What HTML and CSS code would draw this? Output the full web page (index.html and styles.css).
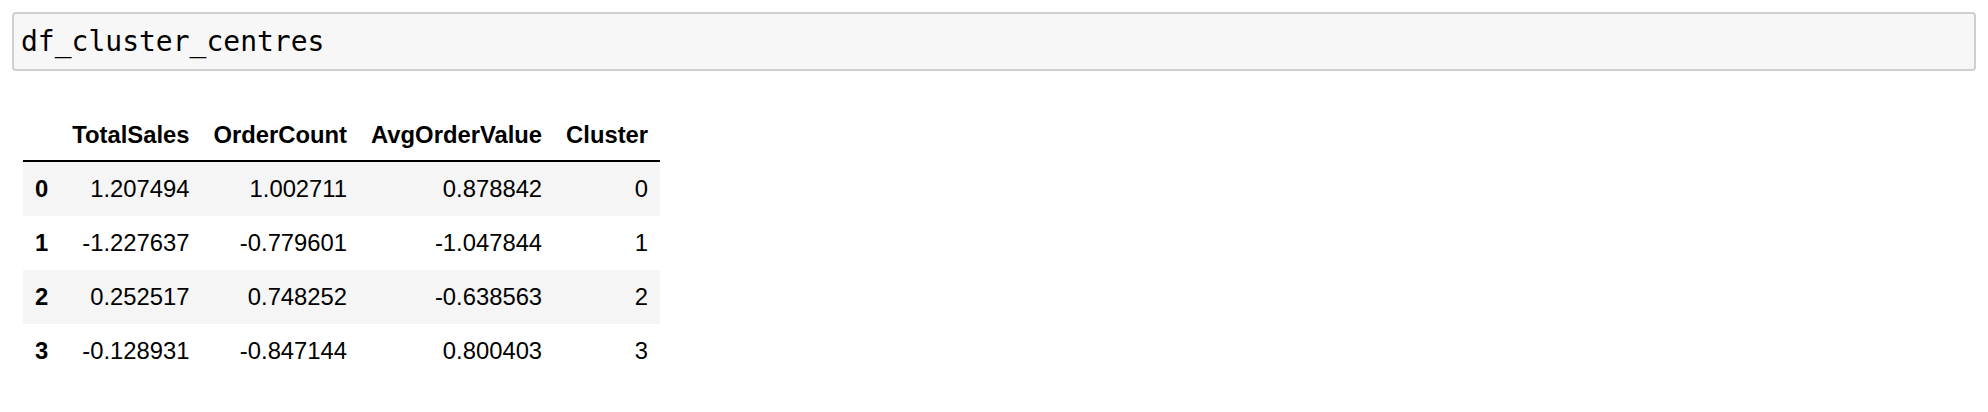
FILE: index.html
```html
<!DOCTYPE html>
<html>
<head>
<meta charset="utf-8">
<link rel="stylesheet" href="styles.css">
</head>
<body>
<div class="cell">
  <div class="input">df_cluster_centres</div>
  <div class="output">
    <table class="dataframe">
      <thead>
        <tr><th></th><th>TotalSales</th><th>OrderCount</th><th>AvgOrderValue</th><th>Cluster</th></tr>
      </thead>
      <tbody>
        <tr><th>0</th><td>1.207494</td><td>1.002711</td><td>0.878842</td><td>0</td></tr>
        <tr><th>1</th><td>-1.227637</td><td>-0.779601</td><td>-1.047844</td><td>1</td></tr>
        <tr><th>2</th><td>0.252517</td><td>0.748252</td><td>-0.638563</td><td>2</td></tr>
        <tr><th>3</th><td>-0.128931</td><td>-0.847144</td><td>0.800403</td><td>3</td></tr>
      </tbody>
    </table>
  </div>
</div>
</body>
</html>
```

FILE: styles.css
```css
html, body {
  margin: 0;
  padding: 0;
  background: #ffffff;
}
.cell {
  padding: 12px 12px 0 12px;
}
.input {
  background: #f7f7f7;
  border: 2px solid #cfcfcf;
  border-radius: 4px;
  padding: 11px 7px;
  font-family: "DejaVu Sans Mono", monospace;
  font-size: 28px;
  line-height: 33px;
  color: #000;
}
.output {
  padding: 36px 0 0 11px;
}
.dataframe {
  border-collapse: collapse;
  border-spacing: 0;
  font-family: "Liberation Sans", Arial, sans-serif;
  font-size: 23.8px;
  color: #000;
}
.dataframe thead {
  border-bottom: 2px solid #000;
  vertical-align: bottom;
}
.dataframe th, .dataframe td {
  text-align: right;
  vertical-align: middle;
  padding: 13px 12px;
  line-height: 28px;
  white-space: nowrap;
}
.dataframe thead th {
  padding-top: 14px;
  padding-bottom: 11px;
}
.dataframe th {
  font-weight: bold;
}
.dataframe tbody tr:nth-child(odd) {
  background: #f5f5f5;
}
```
